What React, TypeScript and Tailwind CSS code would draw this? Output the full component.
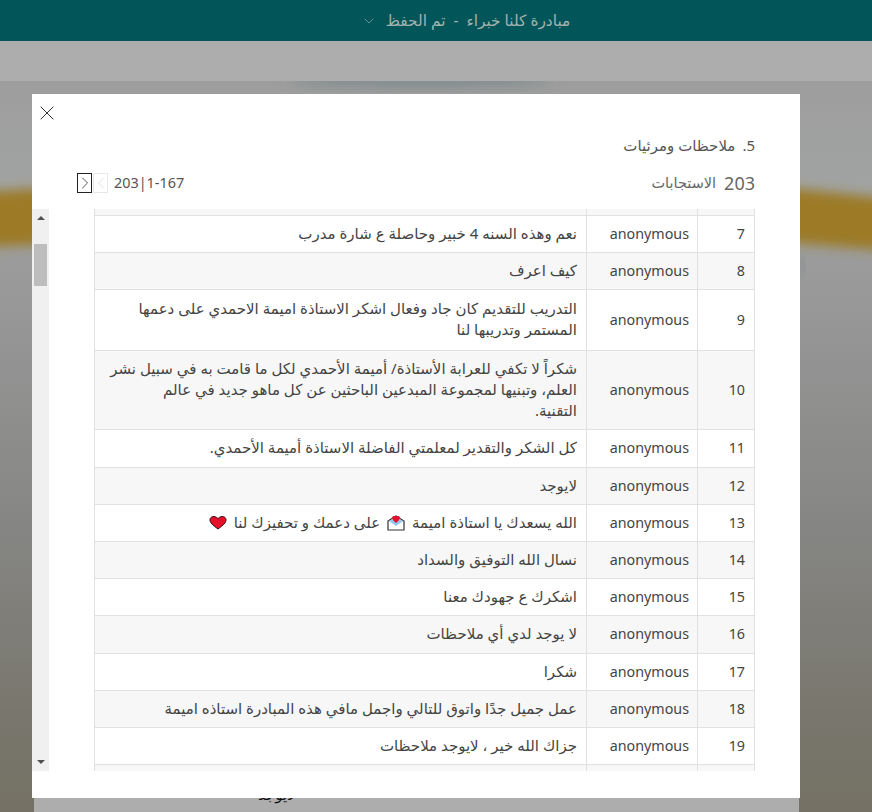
import { ChevronDown, ChevronLeft, ChevronRight, X } from "lucide-react";
import type { ReactNode } from "react";

const FONT = "font-['Noto_Sans','DejaVu_Sans',sans-serif]";

function EnvelopeHeart() {
  return (
    <svg viewBox="0 0 18 16" className="inline-block h-[16px] w-[18px] align-[-3px] mx-[3px]">
      <path d="M1 6 L9 1 L17 6 V15 H1 Z" fill="#fff" stroke="#333" strokeWidth="1.2" />
      <path d="M2 6 L9 11 L16 6 L9 3 Z" fill="#8fc8ec" />
      <path d="M9 8 C6 5.5 4.8 4.2 5.2 2.6 C5.7 0.8 8 0.6 9 2.2 C10 0.6 12.3 0.8 12.8 2.6 C13.2 4.2 12 5.5 9 8 Z" fill="#e8112d" />
    </svg>
  );
}

function RedHeart() {
  return (
    <svg viewBox="0 0 18 15" className="inline-block h-[15px] w-[18px] align-[-2px] mx-[3px]">
      <path d="M9 14 C3.5 10 0.8 7.6 1 4.6 C1.2 1.6 5.6 0 9 3.6 C12.4 0 16.8 1.6 17 4.6 C17.2 7.6 14.5 10 9 14 Z" fill="#e3122a" stroke="#3a0a10" strokeWidth="1" />
    </svg>
  );
}

const rows: { id: number; h: string; alt?: boolean; text: ReactNode }[] = [
  { id: 7, h: "h-[37px]", text: "نعم وهذه السنه 4 خبير وحاصلة ع شارة مدرب" },
  { id: 8, h: "h-[37px]", alt: true, text: "كيف اعرف" },
  {
    id: 9,
    h: "h-[61px]",
    text: (
      <>
        التدريب للتقديم كان جاد وفعال اشكر الاستاذة اميمة الاحمدي على دعمها
        <br />
        المستمر وتدريبها لنا
      </>
    ),
  },
  {
    id: 10,
    h: "h-[79px]",
    alt: true,
    text: (
      <>
        شكراً لا تكفي للعرابة الأستاذة/ أميمة الأحمدي لكل ما قامت به في سبيل نشر
        <br />
        العلم، وتبنيها لمجموعة المبدعين الباحثين عن كل ماهو جديد في عالم
        <br />
        التقنية.
      </>
    ),
  },
  { id: 11, h: "h-[38px]", text: "كل الشكر والتقدير لمعلمتي الفاضلة الاستاذة أميمة الأحمدي." },
  { id: 12, h: "h-[37px]", alt: true, text: "لايوجد" },
  {
    id: 13,
    h: "h-[37px]",
    text: (
      <>
        الله يسعدك يا استاذة اميمة <EnvelopeHeart /> على دعمك و تحفيزك لنا <RedHeart />
      </>
    ),
  },
  { id: 14, h: "h-[37px]", alt: true, text: "نسال الله التوفيق والسداد" },
  { id: 15, h: "h-[37px]", text: "اشكرك ع جهودك معنا" },
  { id: 16, h: "h-[38px]", alt: true, text: "لا يوجد لدي أي ملاحظات" },
  { id: 17, h: "h-[37px]", text: "شكرا" },
  { id: 18, h: "h-[37px]", alt: true, text: "عمل جميل جدًا واتوق للتالي واجمل مافي هذه المبادرة استاذه اميمة" },
  { id: 19, h: "h-[37px]", text: "جزاك الله خير ، لايوجد ملاحظات" },
];

function Row({ id, h, alt, text }: { id?: number; h: string; alt?: boolean; text?: ReactNode }) {
  return (
    <div
      dir="rtl"
      className={`grid grid-cols-[56px_111px_492px] border-b border-[#e1e1e1] text-[14.3px] leading-[21px] text-[#444] ${h} ${alt ? "bg-[#f7f7f7]" : "bg-white"}`}
    >
      <div className="flex items-center pb-[2px] pr-[9px]">{id}</div>
      <div className="flex items-center border-r border-[#e1e1e1] pb-[2px] pr-[8px]">{id ? "anonymous" : ""}</div>
      <div className="flex items-center border-r border-[#e1e1e1] pb-[2px] pr-[9px] text-[15px]">
        <div>{text}</div>
      </div>
    </div>
  );
}

function Scrollbar() {
  return (
    <div className="relative flex h-full w-[17px] flex-col items-center justify-between bg-[#f0f0f0] py-[7px]">
      <svg viewBox="0 0 8 4" className="h-[4px] w-[8px]">
        <polygon points="4,0 8,4 0,4" fill="#505050" />
      </svg>
      <div className="absolute top-[35px] left-[2px] h-[42px] w-[13px] bg-[#bdbdbd]" />
      <svg viewBox="0 0 8 4" className="h-[4px] w-[8px]">
        <polygon points="0,0 8,0 4,4" fill="#505050" />
      </svg>
    </div>
  );
}

function Modal() {
  return (
    <div className={`absolute top-[94px] left-[32px] flex h-[704px] w-[768px] flex-col bg-white ${FONT}`}>
      <button className="ml-[3px] mt-[7px] h-[24px] w-[24px] text-[#333]">
        <X size={24} strokeWidth={1} />
      </button>

      <div dir="rtl" className="mr-[45px] mt-[10px] flex h-[20px] items-center text-[15px] text-[#555]">
        <span className="ml-[7px]" dir="ltr">.5</span>
        <span>ملاحظات ومرئيات</span>
      </div>

      <div className="ml-[45px] mr-[45px] mt-[18px] flex h-[20px] items-center justify-between">
        <div className="flex items-center">
          <div className="flex h-[20px] w-[15px] items-center justify-center border border-[#222] text-[#444]">
            <ChevronRight size={20} strokeWidth={1.1} className="shrink-0" />
          </div>
          <div className="ml-[1px] flex h-[20px] w-[15px] items-center justify-center border border-[#e8e8e8] text-[#ddd]">
            <ChevronLeft size={20} strokeWidth={1.1} className="shrink-0" />
          </div>
          <span className="ml-[6px] text-[14.4px] text-[#555]">203|1-167</span>
        </div>
        <div dir="rtl" className="flex items-center gap-[8px] text-[#666]">
          <span className="text-[18px]">203</span>
          <span className="text-[14.5px]">الاستجابات</span>
        </div>
      </div>

      <div className="mt-[16px] flex h-[562px] w-full">
        <Scrollbar />
        <div className="ml-[45px] h-full w-[661px] overflow-hidden border-x border-[#e1e1e1]">
          <Row h="h-[7px]" alt />
          {rows.map((r) => (
            <Row key={r.id} {...r} />
          ))}
          <Row h="h-[20px]" alt />
        </div>
      </div>
    </div>
  );
}

export default function App() {
  return (
    <div className={`relative flex h-[812px] w-[872px] flex-col overflow-hidden ${FONT}`}>
      <header className="flex h-[41px] items-center justify-center bg-[#025559] pl-[59px] text-[15.4px] text-[#a3b3b0]">
        <ChevronDown size={16} strokeWidth={1} className="mr-[9px]" />
        <span dir="rtl">مبادرة كلنا خبراء&nbsp; - &nbsp;تم الحفظ</span>
      </header>
      <div className="h-[40px] bg-[#adadad]" />
      <main className="relative flex-1 bg-[linear-gradient(180deg,#9d9d9d_0%,#a1a3a2_14%,#989898_30%,#868685_60%,#77756a_90%,#757265_100%)] pl-[34px]">
        <svg viewBox="0 0 872 731" className="absolute left-0 top-0 h-full w-full" aria-hidden>
          <defs>
            <filter id="blur-band" x="-10%" y="-50%" width="120%" height="200%">
              <feGaussianBlur stdDeviation="6" />
            </filter>
          </defs>
          <path d="M-20 111 L34 108 L440 95 L780 106 L892 118 L892 170 L780 161 L440 150 L34 164 L-20 166 Z" fill="#9c7a25" filter="url(#blur-band)" />
          <ellipse cx="420" cy="0" rx="130" ry="6" fill="#7f8a8c" filter="url(#blur-band)" />
          <ellipse cx="802" cy="185" rx="3" ry="8" fill="#808488" filter="url(#blur-band)" />
        </svg>
        <div className="relative mt-[20px] h-full w-[765px] bg-[#adadad]">
          <span dir="rtl" className="absolute top-[681px] left-[224px] text-[15px] leading-[24px] text-[#111]">لايوجد</span>
        </div>
      </main>
      <Modal />
    </div>
  );
}
